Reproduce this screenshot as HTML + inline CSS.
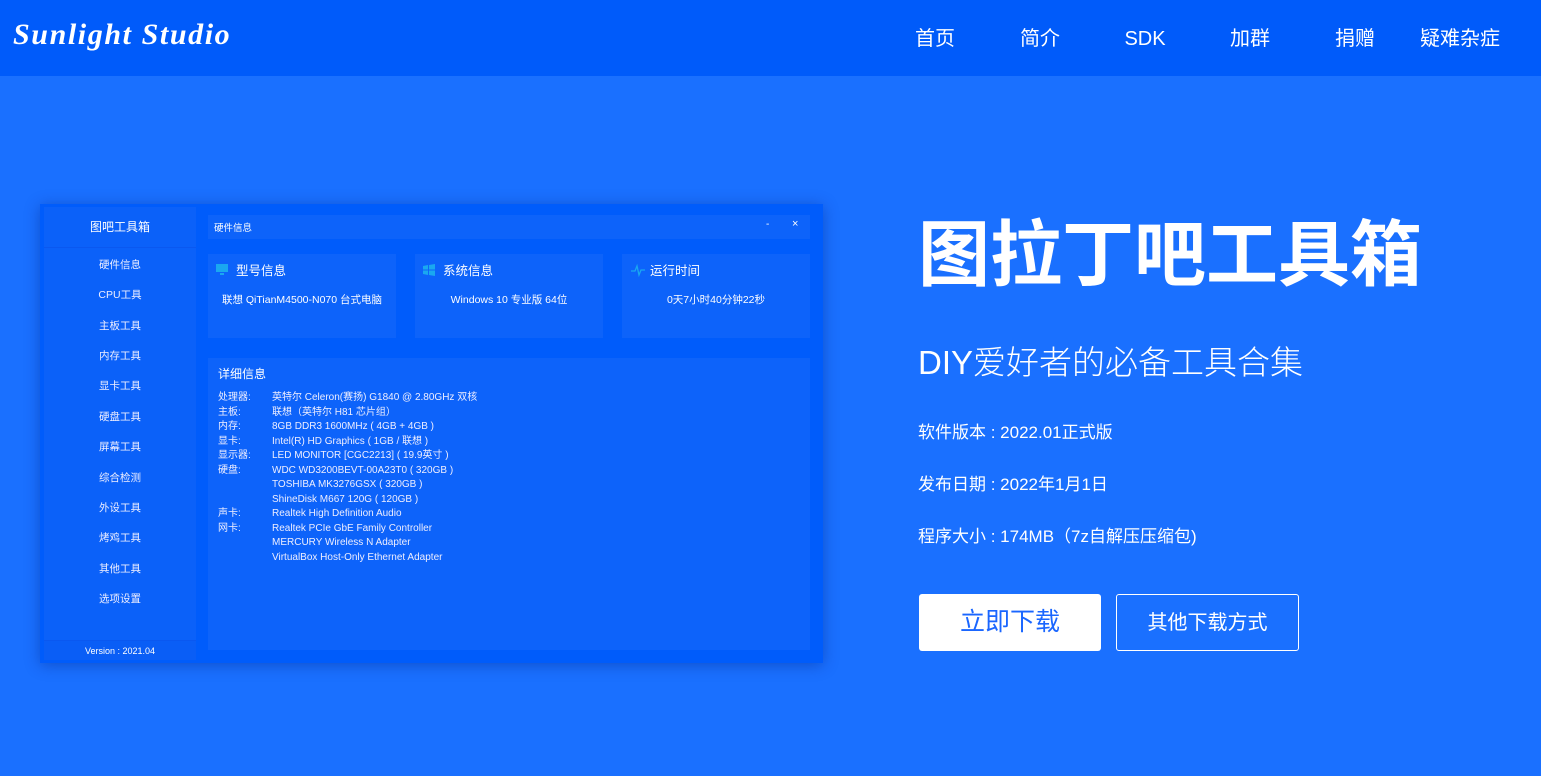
<!DOCTYPE html>
<html><head><meta charset="utf-8"><style>
*{margin:0;padding:0;box-sizing:border-box}
body{width:1541px;height:776px;overflow:hidden;background:#1a70ff;font-family:"Liberation Sans","Noto Sans CJK SC",sans-serif;color:#fff;position:relative}
.hd{position:absolute;left:0;top:0;width:1541px;height:76px;background:#005bfa}
.logo{position:absolute;left:13px;top:18px;font-family:"Liberation Serif","Noto Serif CJK SC",serif;font-style:italic;font-weight:bold;font-size:30px;letter-spacing:1.6px;line-height:34px}
.nav{position:absolute;top:25px;height:28px;line-height:28px;font-size:20px;transform:translateX(-50%);white-space:nowrap}
.win{position:absolute;left:40px;top:204px;width:783px;height:459px;background:#005cfb;box-shadow:0 2px 14px rgba(0,40,140,.45)}
.side{position:absolute;left:4px;top:3px;width:152px;height:453px;background:#0b61f9}
.side .t{height:41px;line-height:41px;text-align:center;font-size:12px;border-bottom:1px solid #0a58f0}
.side .i{position:absolute;width:152px;text-align:center;font-size:10.5px;color:#eef}
.side .v{position:absolute;bottom:0;width:152px;height:20px;line-height:20px;text-align:center;font-size:9px;background:#0a5ef6;border-top:1px solid #0a58f0}
.p{position:absolute;background:#0d63fa}
.small{font-size:10px}
.ct{position:absolute;font-size:12.5px}
.cv{position:absolute;font-size:10.5px;width:100%;text-align:center;top:38px}
.row{position:absolute;font-size:10px;white-space:nowrap;color:#eef}
.r{position:absolute;left:918px}
</style></head><body>
<div class="hd">
<div class="logo">Sunlight Studio</div>
<div class="nav" style="left:935px">首页</div>
<div class="nav" style="left:1040px">简介</div>
<div class="nav" style="left:1145px">SDK</div>
<div class="nav" style="left:1250px">加群</div>
<div class="nav" style="left:1355px">捐赠</div>
<div class="nav" style="left:1460px">疑难杂症</div>
</div>

<div class="win">
<div class="side">
<div class="t">图吧工具箱</div>
<div class="i" style="top:50px">硬件信息</div>
<div class="i" style="top:80px">CPU工具</div>
<div class="i" style="top:111px">主板工具</div>
<div class="i" style="top:141px">内存工具</div>
<div class="i" style="top:171px">显卡工具</div>
<div class="i" style="top:202px">硬盘工具</div>
<div class="i" style="top:232px">屏幕工具</div>
<div class="i" style="top:263px">综合检测</div>
<div class="i" style="top:293px">外设工具</div>
<div class="i" style="top:323px">烤鸡工具</div>
<div class="i" style="top:354px">其他工具</div>
<div class="i" style="top:384px">选项设置</div>
<div class="v">Version : 2021.04</div>
</div>
<div class="p" style="left:168px;top:11px;width:602px;height:24px">
<span class="small" style="position:absolute;left:6px;top:5px;font-size:9.5px">硬件信息</span>
<span style="position:absolute;left:558px;top:4px;font-size:10px">-</span>
<span style="position:absolute;left:584px;top:3px;font-size:11px">×</span>
</div>
<div class="p" style="left:168px;top:50px;width:188px;height:84px">
<svg style="position:absolute;left:8px;top:10px" width="12" height="11"><rect x="0" y="0" width="12" height="8" fill="#1aa8f0"/><rect x="4" y="9" width="4" height="2" fill="#1aa8f0"/></svg>
<div class="ct" style="left:28px;top:6px">型号信息</div>
<div class="cv">联想 QiTianM4500-N070 台式电脑</div>
</div>
<div class="p" style="left:375px;top:50px;width:188px;height:84px">
<svg style="position:absolute;left:8px;top:10px" width="12" height="12"><path d="M0 2L5 1V5.5H0ZM6 1L12 0V5.5H6ZM0 6.5H5V11L0 10ZM6 6.5H12V12L6 11Z" fill="#1aa8f0"/></svg>
<div class="ct" style="left:28px;top:6px">系统信息</div>
<div class="cv">Windows 10 专业版 64位</div>
</div>
<div class="p" style="left:582px;top:50px;width:188px;height:84px">
<svg style="position:absolute;left:9px;top:9px" width="14" height="14"><path d="M0 8H4L6 3L8 12L10 7H14" stroke="#1aa8f0" stroke-width="1.3" fill="none"/></svg>
<div class="ct" style="left:28px;top:6px">运行时间</div>
<div class="cv">0天7小时40分钟22秒</div>
</div>
<div class="p" style="left:168px;top:154px;width:602px;height:292px">
<div class="ct" style="left:10px;top:7px;font-size:12px">详细信息</div>
</div>
<div class="row" style="left:178px;top:187px;line-height:14.5px">处理器:<br>主板:<br>内存:<br>显卡:<br>显示器:<br>硬盘:<br><br><br>声卡:<br>网卡:</div>
<div class="row" style="left:232px;top:187px;line-height:14.5px">英特尔 Celeron(赛扬) G1840 @ 2.80GHz 双核<br>联想（英特尔 H81 芯片组）<br>8GB DDR3 1600MHz ( 4GB + 4GB )<br>Intel(R) HD Graphics ( 1GB / 联想 )<br>LED MONITOR [CGC2213] ( 19.9英寸 )<br>WDC WD3200BEVT-00A23T0 ( 320GB )<br>TOSHIBA MK3276GSX ( 320GB )<br>ShineDisk M667 120G ( 120GB )<br>Realtek High Definition Audio<br>Realtek PCIe GbE Family Controller<br>MERCURY Wireless N Adapter<br>VirtualBox Host-Only Ethernet Adapter</div>
</div>

<div class="r" style="top:206px;font-size:72px;font-weight:bold;line-height:100px">图拉丁吧工具箱</div>
<div class="r" style="top:336px;font-size:33px;font-weight:300">DIY爱好者的必备工具合集</div>
<div class="r" style="top:418px;font-size:17px">软件版本 : 2022.01正式版</div>
<div class="r" style="top:470px;font-size:17px">发布日期 : 2022年1月1日</div>
<div class="r" style="top:522px;font-size:17px">程序大小 : 174MB（7z自解压压缩包)</div>
<div style="position:absolute;left:919px;top:594px;width:182px;height:57px;background:#fff;border-radius:3px;color:#1a66ff;font-size:25px;text-align:center;line-height:57px">立即下载</div>
<div style="position:absolute;left:1116px;top:594px;width:183px;height:57px;border:1px solid #fff;border-radius:3px;font-size:20px;text-align:center;line-height:56px">其他下载方式</div>
</body></html>
